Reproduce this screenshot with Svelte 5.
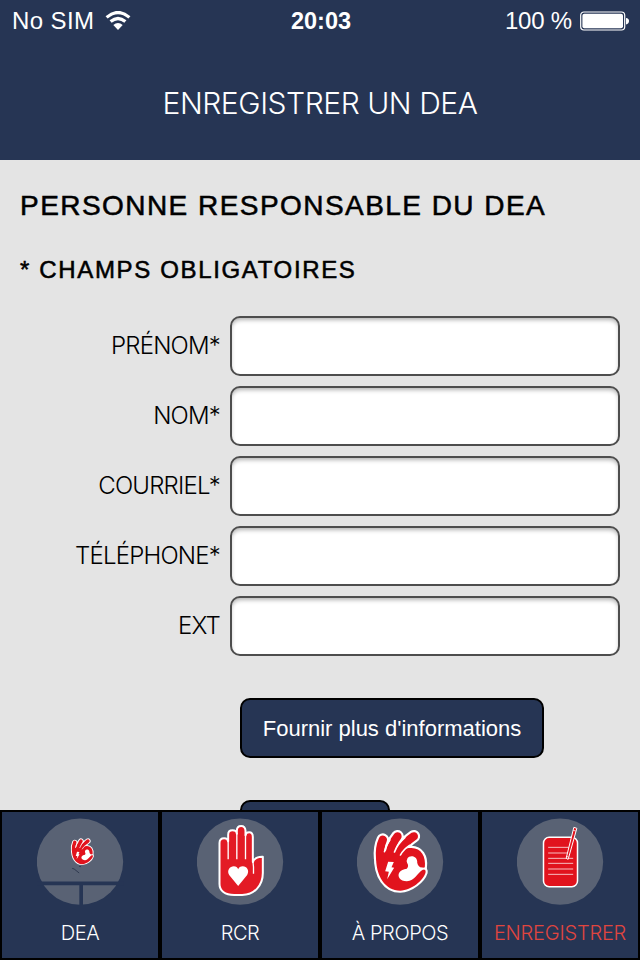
<script lang="ts">
	interface Field {
		id: string;
		label: string;
		type: string;
	}

	const fields: Field[] = [
		{ id: 'firstname', label: 'PRÉNOM*', type: 'text' },
		{ id: 'lastname', label: 'NOM*', type: 'text' },
		{ id: 'email', label: 'COURRIEL*', type: 'email' },
		{ id: 'phone', label: 'TÉLÉPHONE*', type: 'tel' },
		{ id: 'ext', label: 'EXT', type: 'text' }
	];

	const tabs = [
		{ id: 'dea', label: 'DEA' },
		{ id: 'rcr', label: 'RCR' },
		{ id: 'about', label: 'À PROPOS' },
		{ id: 'register', label: 'ENREGISTRER' }
	];

	const fingers = 'M188 104Q177 128 180 160M232 94Q214 116 208 148M281 94Q254 112 234 142';
	const palm =
		'M168 150C165 215 197 257 240 257C275 255 309 226 316 203Q318 192 308 191L314 187C318 155 303 128 272 129C254 129 244 137 238 148L205 134Z';

	let active = $state('register');
</script>

{#snippet okHand()}
	<path class="finger-outline" d={fingers} />
	<path class="palm-outline" d={palm} />
	<path class="red" d={palm} />
	<path class="finger" d={fingers} />
	<path class="split" d="M209 105Q196 122 193 140M254 98Q232 117 223 141M268 121Q249 134 241 150" />
	<path
		class="white"
		d="M262 160C267 150 289 151 291 168Q290 179 300 187L320 189V193L308 194C292 203 284 227 260 229C239 229 230 214 238 202Q244 193 260 191Q267 183 261 174Q258 167 262 160Z"
	/>
	<path class="white" d="M204 170L221 171L214 187L222 188L201 223L206 200L195 199Z" />
{/snippet}

<div class="app">
	<header>
		<div class="status">
			<div class="carrier">
				<span>No SIM</span>
				<svg width="26" height="20" viewBox="0 0 26 20">
					<path class="wave" d="M1.6 6.4Q13-3.4 24.4 6.4M5.6 10.6Q13 4.4 20.4 10.6" />
					<path class="white" d="M8.3 14Q13 10.2 17.7 14L13 19Z" />
				</svg>
			</div>
			<time>20:03</time>
			<div class="power">
				<span>100 %</span>
				<svg width="50" height="20" viewBox="0 0 50 20">
					<rect class="cell" x="0.7" y="1" width="44" height="18" rx="3.2" />
					<rect class="white" x="2.4" y="2.7" width="40.6" height="14.6" rx="2" />
					<path class="white" d="M46 7Q49 7.4 49 10T46 13.4Z" />
				</svg>
			</div>
		</div>
		<h1>ENREGISTRER UN DEA</h1>
	</header>

	<main>
		<h2>PERSONNE RESPONSABLE DU DEA</h2>
		<h3>* CHAMPS OBLIGATOIRES</h3>

		<form>
			{#each fields as field (field.id)}
				<div class="row">
					<label for={field.id}>{field.label}</label>
					<input id={field.id} type={field.type} />
				</div>
			{/each}

			<div class="actions">
				<button type="button" class="more">Fournir plus d'informations</button>
				<button type="submit" class="send"></button>
			</div>
		</form>
	</main>

	<nav>
		{#each tabs as tab (tab.id)}
			<button
				class="tab {tab.id}"
				class:active={active === tab.id}
				onclick={() => (active = tab.id)}
			>
				<svg width="87" height="87" viewBox="110.5 39 261 261">
					<circle class="disc" cx="239.5" cy="170" r="129.5" />
					{#if tab.id === 'dea'}
						<path class="gap" d="M109 235H370M243 235V302" />
						<path class="mark" d="M216 190L222 192L237 204M237 184L242 185" />
						<g transform="translate(143.9 68.2) scale(0.425)">
							{@render okHand()}
						</g>
					{:else if tab.id === 'rcr'}
						<path
							class="hand"
							d="M178 114Q178 100 192 100Q203 100 204 109V89Q204 76 217 76Q229 76 230 86V77Q230 63 243 63Q255 63 256 77V91Q257 82 267 82Q278 82 278 96V171Q285 154 308 155V204C308 243 281 270 246 270H222C194 270 178 257 178 237Z"
						/>
						<path class="lines" d="M204 105V163M230 84V163M256 88V163M278 168Q281 185 280 206" />
						<path
							class="white"
							d="M234 243L207 210C199 197 209 184 221 184Q231 184 234 193Q237 184 248 184C260 184 269 197 261 210Z"
						/>
					{:else if tab.id === 'about'}
						{@render okHand()}
					{:else}
						<rect class="sheet" x="190" y="97" width="102" height="148" rx="17" />
						<path
							class="rules"
							d="M204 127H271M204 144H266M204 160H279M204 175H279M204 192H279M204 208H279"
						/>
						<path class="pen" d="M281 67L290 70L264 163L258 160Z" />
						<path class="rules" d="M279 76L287 78M258 154L265 156" />
					{/if}
				</svg>
				<span>{tab.label}</span>
			</button>
		{/each}
	</nav>
</div>

<style>
	:global(body) {
		margin: 0;
	}

	.app {
		width: 640px;
		height: 960px;
		display: flex;
		flex-direction: column;
		overflow: hidden;
		background: #e4e4e4;
		font-family: 'Liberation Sans', Arial, sans-serif;
	}

	header {
		flex: none;
		height: 160px;
		background: #263554;
		color: #fff;
	}

	.status {
		display: grid;
		grid-template-columns: 1fr auto 1fr;
		align-items: center;
		height: 40px;
		padding: 1px 10px 0 12px;
		box-sizing: border-box;
		font-size: 24px;
	}

	.carrier,
	.power {
		display: flex;
		align-items: center;
		gap: 11px;
	}

	.carrier span {
		letter-spacing: 0.4px;
	}

	.power {
		justify-content: flex-end;
		gap: 8px;
	}

	.power span {
		letter-spacing: -0.2px;
	}

	time {
		padding-top: 1px;
		font-weight: bold;
		font-size: 23.5px;
	}

	.wave {
		fill: none;
		stroke: #fff;
		stroke-width: 3.2;
	}

	.cell {
		fill: none;
		stroke: #fff;
		stroke-width: 1.2;
	}

	h1 {
		margin: 0;
		padding-top: 43px;
		font: 300 30px/40px Inter, sans-serif;
		letter-spacing: -0.45px;
		text-align: center;
	}

	main {
		flex: 1;
		min-height: 0;
		padding: 0 20px;
		overflow: hidden;
	}

	h2,
	h3 {
		font-weight: normal;
		color: #000;
		white-space: nowrap;
		-webkit-text-stroke: 0.55px #000;
	}

	h2 {
		margin: 28px 0 0;
		font-size: 28px;
		line-height: 36px;
		letter-spacing: 1.45px;
	}

	h3 {
		margin: 31px 0 31px;
		font-size: 24px;
		line-height: 30px;
		letter-spacing: 1.65px;
	}

	.row {
		display: flex;
		align-items: center;
		gap: 10px;
		margin-bottom: 10px;
	}

	label {
		width: 200px;
		font: 300 24px/60px Inter, sans-serif;
		letter-spacing: -0.8px;
		text-align: right;
	}

	input {
		box-sizing: border-box;
		width: 390px;
		height: 60px;
		padding: 0 14px;
		border: 2px solid #4d4d4d;
		border-radius: 10px;
		background: #fff;
		box-shadow: inset 0 3px 4px -1px rgba(0, 0, 0, 0.3);
		font-size: 24px;
	}

	.actions {
		display: flex;
		flex-direction: column;
		align-items: flex-start;
		gap: 42px;
		padding: 32px 0 0 220px;
	}

	.actions button {
		height: 60px;
		padding: 2px 0 0;
		border: 2px solid #000;
		border-radius: 10px;
		background: #263554;
		color: #fff;
		font: 22px 'Liberation Sans', Arial, sans-serif;
	}

	.more {
		width: 304px;
	}

	.send {
		width: 150px;
	}

	nav {
		flex: none;
		display: grid;
		grid-template-columns: repeat(4, 1fr);
		height: 150px;
	}

	.tab {
		display: flex;
		flex-direction: column;
		align-items: center;
		gap: 12px;
		min-width: 0;
		padding: 6px 0 0;
		border: 2px solid #000;
		background: #263554;
		color: #fff;
		font: 300 20px/32px Inter, sans-serif;
		letter-spacing: -0.4px;
		white-space: nowrap;
	}

	.tab svg {
		flex: none;
	}

	.tab.active {
		color: #e0453f;
	}

	.tab.register {
		letter-spacing: -0.2px;
	}

	.disc {
		fill: #596274;
	}

	.gap {
		fill: none;
		stroke: #263554;
		stroke-width: 11;
	}

	.mark {
		fill: none;
		stroke: #303a50;
		stroke-width: 3;
	}

	.white {
		fill: #fff;
	}

	.palm-outline {
		fill: #fff;
		stroke: #fff;
		stroke-width: 13;
		stroke-linejoin: round;
	}

	.red {
		fill: #e1131d;
	}

	.finger,
	.finger-outline {
		fill: none;
		stroke: #e1131d;
		stroke-width: 25;
		stroke-linecap: round;
	}

	.finger-outline {
		stroke: #fff;
		stroke-width: 38;
	}

	.split {
		fill: none;
		stroke: #fff;
		stroke-width: 5;
		stroke-linecap: round;
	}

	.hand {
		fill: #e31b25;
		stroke: #fff;
		stroke-width: 6;
		stroke-linejoin: round;
	}

	.lines {
		fill: none;
		stroke: #fff;
		stroke-width: 4;
	}

	.sheet {
		fill: #e1131d;
		stroke: #fff;
		stroke-width: 4.5;
	}

	.rules {
		fill: none;
		stroke: #fff;
		stroke-width: 2.2;
	}

	.pen {
		fill: #e1131d;
		stroke: #fff;
		stroke-width: 3;
		stroke-linejoin: round;
	}
</style>
